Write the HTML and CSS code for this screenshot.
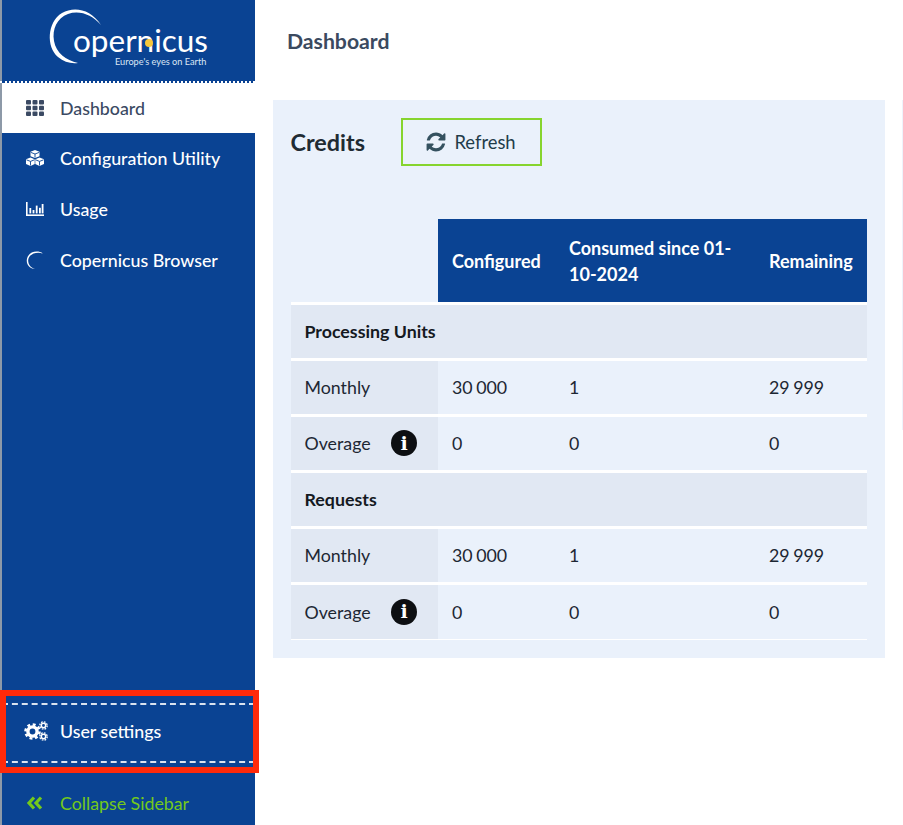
FILE: index.html
```html
<!DOCTYPE html>
<html>
<head>
  <title>Dashboard</title>
  <link rel="stylesheet" href="styles.css">
</head>
<body>
  <aside class="sidebar">
    <div class="logo">
      <svg width="255" height="81" viewBox="0 0 255 81">
        <path d="M101 25 C91 9 74 6 62 13 C47 22 46 47 58 57 C64 62 71 64 78 63 C66 60 56 53 54 41 C52 29 57 18 68 14 C80 10 92 15 101 25 Z" fill="#fff"/>
        <text x="73" y="52" class="logo-name">opernicus</text>
        <circle cx="149" cy="43" r="4" fill="#f6c73b"/>
        <text x="115" y="64.500" class="logo-tag">Europe's eyes on Earth</text>
      </svg>
    </div>
    <nav class="menu">
      <a class="menu-item active">
        <svg class="icon" viewBox="0 0 18 16"><g fill="#3b4a63"><rect x="0" y="0" width="5" height="4.400" rx="1"/><rect x="6.500" y="0" width="5" height="4.400" rx="1"/><rect x="13" y="0" width="5" height="4.400" rx="1"/><rect x="0" y="5.800" width="5" height="4.400" rx="1"/><rect x="6.500" y="5.800" width="5" height="4.400" rx="1"/><rect x="13" y="5.800" width="5" height="4.400" rx="1"/><rect x="0" y="11.600" width="5" height="4.400" rx="1"/><rect x="6.500" y="11.600" width="5" height="4.400" rx="1"/><rect x="13" y="11.600" width="5" height="4.400" rx="1"/></g></svg>
        Dashboard
      </a>
      <a class="menu-item">
        <svg class="icon" viewBox="0 0 18 16"><g fill="#fff"><path d="M9 0 L13.500 1.800 V6.200 L9 8 L4.500 6.200 V1.800 Z"/><path d="M4.500 7.500 L8.700 9.200 V14 L4.500 16 L0 14 V9.200 Z"/><path d="M13.500 7.500 L18 9.200 V14 L13.500 16 L9.300 14 V9.200 Z"/></g><g fill="none" stroke="#0a4393" stroke-width=".9"><path d="M4.800 2.400 L9 4 L13.200 2.400 M9 4 V7.500"/><path d="M.4 9.800 L4.500 11.400 L8.400 9.800 M4.500 11.400 V15.500"/><path d="M9.600 9.800 L13.500 11.400 L17.600 9.800 M13.500 11.400 V15.500"/></g></svg>
        Configuration Utility
      </a>
      <a class="menu-item">
        <svg class="icon" viewBox="0 0 18 14"><g fill="#fff"><rect x="0" y="0" width="1.600" height="14"/><rect x="0" y="12.400" width="18" height="1.600"/><rect x="3.400" y="6" width="1.800" height="5.400"/><rect x="6.600" y="8" width="1.800" height="3.400"/><rect x="9.800" y="3.600" width="1.800" height="7.800"/><rect x="13" y="5.800" width="1.800" height="5.600"/><rect x="15.700" y="2" width="1.800" height="9.400"/></g></svg>
        Usage
      </a>
      <a class="menu-item">
        <svg class="icon" viewBox="0 0 18 18"><path d="M17 2.500 C11 -1.500 1.500 1 .8 9 C.4 14 4 17.600 9 18 C5 16.600 2 13.500 2.200 9 C2.500 3.500 10 .2 17 2.500 Z" fill="#fff"/></svg>
        Copernicus Browser
      </a>
    </nav>
    <div class="settings">
      <a class="menu-item">
        <svg class="icon icon-cogs" viewBox="0 0 24 20">
          <g fill="none" stroke="#fff">
            <circle cx="8.500" cy="10.500" r="4.600" stroke-width="3.400"/>
            <circle cx="8.500" cy="10.500" r="7" stroke-width="2.600" stroke-dasharray="2.900 2.600"/>
            <circle cx="19.500" cy="4.500" r="2.200" stroke-width="1.500"/>
            <circle cx="19.500" cy="4.500" r="3.700" stroke-width="1.300" stroke-dasharray="1.700 1.200"/>
            <circle cx="19.500" cy="15.500" r="2.200" stroke-width="1.500"/>
            <circle cx="19.500" cy="15.500" r="3.700" stroke-width="1.300" stroke-dasharray="1.700 1.200"/>
          </g>
        </svg>
        User settings
      </a>
      <div class="highlight"></div>
    </div>
    <a class="collapse">
      <svg class="icon" viewBox="0 0 18 14"><path d="M8 1.500 L3 7 L8 12.500 M15 1.500 L10 7 L15 12.500" fill="none" stroke="#74c91b" stroke-width="3.200"/></svg>
      Collapse Sidebar
    </a>
  </aside>

  <main class="content">
    <h1 class="page-title">Dashboard</h1>
    <div class="panels">
      <section class="panel">
        <div class="panel-head">
          <h2>Credits</h2>
          <button class="refresh">
            <svg width="22" height="22" viewBox="0 0 1792 1792"><path fill="#34515f" d="M1639 1056q0 5-1 7-64 268-268 434.500t-478 166.500q-146 0-282.500-55t-243.500-157l-129 129q-19 19-45 19t-45-19-19-45v-448q0-26 19-45t45-19h448q26 0 45 19t19 45-19 45l-137 137q71 66 161 102t187 36q134 0 250-65t186-179q11-17 53-117 8-23 30-23h192q13 0 22.500 9.500t9.500 22.500zm25-800v448q0 26-19 45t-45 19h-448q-26 0-45-19t-19-45 19-45l138-138q-148-137-349-137-134 0-250 65t-186 179q-11 17-53 117-8 23-30 23h-199q-13 0-22.500-9.500t-9.500-22.500v-7q65-268 270-434.500t480-166.500q146 0 284 55.500t245 156.500l130-129q19-19 45-19t45 19 19 45z"/></svg>
            Refresh
          </button>
        </div>
        <table class="credits">
          <thead>
            <tr>
              <th class="blank"></th>
              <th class="col-configured">Configured</th>
              <th class="col-consumed">Consumed since 01-10-2024</th>
              <th class="col-remaining">Remaining</th>
            </tr>
          </thead>
          <tbody>
            <tr class="group"><td colspan="4">Processing Units</td></tr>
            <tr><td class="label">Monthly</td><td>30 000</td><td>1</td><td>29 999</td></tr>
            <tr>
              <td class="label"><div class="label-info">Overage <span class="info"><span class="info-i">i</span></span></div></td>
              <td>0</td><td>0</td><td>0</td>
            </tr>
            <tr class="group"><td colspan="4">Requests</td></tr>
            <tr><td class="label">Monthly</td><td>30 000</td><td>1</td><td>29 999</td></tr>
            <tr>
              <td class="label"><div class="label-info">Overage <span class="info"><span class="info-i">i</span></span></div></td>
              <td>0</td><td>0</td><td>0</td>
            </tr>
          </tbody>
        </table>
      </section>
      <div class="panel-next"></div>
    </div>
  </main>
</body>
</html>
```

FILE: styles.css
```css
* {
  box-sizing: border-box;
}

html,
body {
  height: 100%;
}

body {
  display: flex;
  height: 825px;
  margin: 0;
  overflow: hidden;
  font-family: Lato, Arial, sans-serif;
  background-color: white;
  color: #1d2733;
}

.sidebar {
  display: flex;
  flex-direction: column;
  flex: 0 0 255px;
  height: 825px;
  background-color: #0a4393;
  border-left: 2px solid #8d99a8;
  color: white;
}

.logo {
  height: 83px;
  margin-left: -2px;
  border-bottom: 2px dotted white;
}

.logo svg {
  display: block;
}

.logo-name {
  font-family: Lato, Arial, sans-serif;
  font-size: 31.500px;
  fill: white;
}

.logo-tag {
  font-family: Lato, Arial, sans-serif;
  font-size: 9.200px;
  fill: #dbe6f5;
}

.menu {
  flex: 1;
}

.menu-item {
  display: flex;
  align-items: center;
  height: 51px;
  padding-left: 24px;
  padding-bottom: 2px;
  gap: 16px;
  font-size: 17.800px;
  font-weight: 500;
  color: white;
}

.menu-item.active {
  height: 50px;
  padding-bottom: 0;
  background-color: white;
  color: #3b4a63;
}

.icon {
  flex: 0 0 18px;
  width: 18px;
  height: 18px;
}

.icon-cogs {
  flex-basis: 24px;
  width: 24px;
  height: 20px;
  margin-left: -2px;
  margin-right: -4px;
}

.settings {
  position: relative;
  height: 60px;
  margin-top: 1px;
  margin-bottom: 19px;
  border-top: 2px dashed rgba(255, 255, 255, .85);
  border-bottom: 2px dashed rgba(255, 255, 255, .85);
}

.settings .menu-item {
  height: 54px;
  padding-bottom: 3px;
}

.highlight {
  position: absolute;
  top: -15px;
  left: -2px;
  width: 259px;
  height: 83px;
  border: 6px solid #ff2a0a;
}

.collapse {
  display: flex;
  align-items: center;
  height: 43px;
  padding-left: 24px;
  padding-bottom: 2px;
  gap: 16px;
  font-size: 17.800px;
  color: #74c91b;
}

.content {
  flex: 1;
  min-width: 0;
  padding-left: 18px;
}

.page-title {
  height: 100px;
  margin: 0;
  padding: 28px 0 0 14px;
  font-size: 21.200px;
  line-height: 26px;
  color: #3b4a5f;
}

.panels {
  display: flex;
  gap: 17px;
}

.panel {
  flex: 0 0 612px;
  height: 558px;
  padding: 18px 18px 0 17.500px;
  background-color: #eaf1fb;
}

.panel-next {
  width: 1px;
  height: 330px;
  background-color: #eef3fb;
}

.panel-head {
  display: flex;
  align-items: center;
  gap: 36px;
  height: 48px;
  margin-bottom: 53px;
}

.panel-head h2 {
  margin: 0;
  font-size: 23.400px;
  color: #1f2b33;
}

.refresh {
  display: flex;
  align-items: center;
  justify-content: center;
  gap: 7px;
  width: 141px;
  height: 48px;
  padding: 0 2px 0 0;
  background: none;
  border: 2px solid #86d42e;
  font-family: Lato, Arial, sans-serif;
  font-size: 18.400px;
  color: #1f3c4a;
}

.credits {
  width: 576.500px;
  border-collapse: collapse;
  table-layout: fixed;
  font-size: 17.800px;
}

.credits th {
  height: 84px;
  padding: 3px 14px 0;
  background-color: #0a4393;
  color: white;
  font-size: 18px;
  line-height: 25.500px;
  text-align: left;
}

.credits th.blank {
  width: 147.500px;
  background: none;
}

.col-configured {
  width: 117px;
}

.col-consumed {
  width: 200px;
}

.credits td {
  height: 56px;
  padding: 0 14px;
  border-top: 3px solid white;
  word-spacing: -1px;
}

.credits tbody tr:last-child td {
  border-bottom: 1px solid white;
}

.credits tr.group td {
  background-color: #e1e8f3;
  font-weight: bold;
  color: #14191f;
  word-spacing: 0;
}

.credits td.label {
  background-color: #e1e8f3;
}

.label-info {
  display: flex;
  align-items: center;
  justify-content: space-between;
  margin-right: 7px;
}

.info {
  display: flex;
  align-items: center;
  justify-content: center;
  width: 26px;
  height: 26px;
  border-radius: 50%;
  background-color: #0d0f12;
}

.info-i {
  font-family: "DejaVu Serif", serif;
  font-size: 19px;
  font-weight: bold;
  line-height: 1;
  color: white;
}
```
